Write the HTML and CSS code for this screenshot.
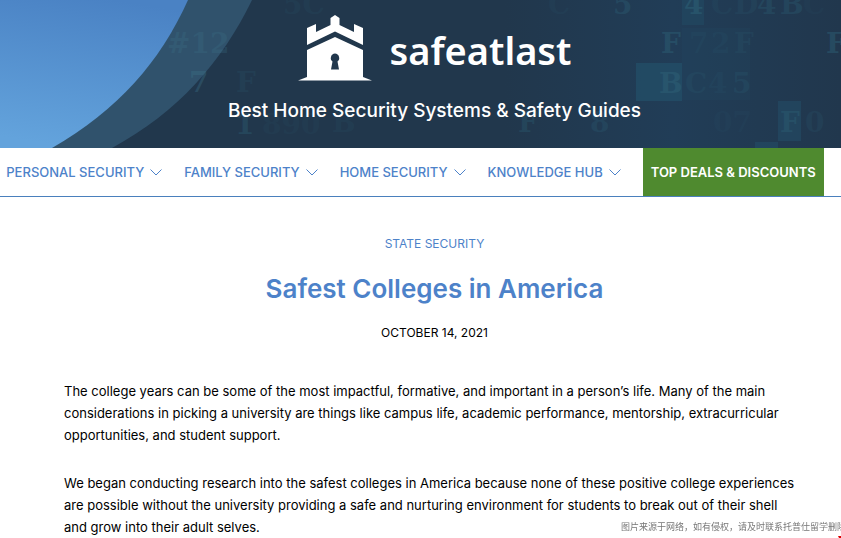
FILE: index.html
```html
<!DOCTYPE html>
<html lang="en">
<head>
    <meta charset="UTF-8">
    <meta name="viewport" content="width=device-width, initial-scale=1.0">
    <title>Safest Colleges in America | SafeAtLast</title>
    <link rel="stylesheet" href="styles.css">
</head>
<body>
    <header class="site-header">
        <svg class="header-art" viewBox="0 0 841 148" preserveAspectRatio="xMinYMin slice" aria-hidden="true">
            <defs>
                <linearGradient id="sky" x1="0.6" y1="0" x2="0.4" y2="1">
                    <stop offset="0" stop-color="#4a82c4"/>
                    <stop offset="1" stop-color="#63a3dc"/>
                </linearGradient>
                <linearGradient id="night" x1="0" y1="0" x2="1" y2="0">
                    <stop offset="0.6" stop-color="#21374c"/>
                    <stop offset="0.8" stop-color="#213d57"/>
                    <stop offset="1" stop-color="#21374d"/>
                </linearGradient>
            </defs>
            <rect width="841" height="148" fill="url(#night)"/>
            <path d="M0 0H252C222 62 178 112 112 148H0Z" fill="#30526c"/>
            <path d="M0 0H188C160 62 118 110 52 148H0Z" fill="url(#sky)"/>
            <!-- code blocks -->
            <g fill="#24506a">
                <rect x="636" y="63" width="46" height="38" opacity="0.7"/>
                <rect x="682" y="0" width="22" height="25" opacity="0.4"/>
                <rect x="682" y="28" width="68" height="72" opacity="0.15"/>
                <rect x="778" y="101" width="23" height="40" opacity="0.5"/>
                <rect x="755" y="142" width="23" height="6" opacity="0.5"/>
            </g>
            <g class="code">
                <text class="lit" x="167" y="53" opacity="0.25">#12</text>
                <text class="lit" x="189" y="92" opacity="0.35">7</text>
                <text x="236" y="92" opacity="0.2">F</text>
                <text x="235" y="134" opacity="0.4">1</text>
                <text x="262" y="134" opacity="0.12">890</text>
                <text x="283" y="14" opacity="0.15">5C</text>
                <text x="332" y="132" opacity="0.15">B</text>
                <text x="518" y="132" opacity="0.35">F</text>
                <text x="548" y="14" opacity="0.12">C</text>
                <text x="613" y="14" opacity="0.4">5</text>
                <text x="684" y="14" opacity="0.6">4</text>
                <text x="711" y="14" opacity="0.15">C</text>
                <text x="734" y="14" opacity="0.2">D</text>
                <text x="757" y="14" opacity="0.35">4</text>
                <text x="780" y="14" opacity="0.35">B</text>
                <text x="803" y="14" opacity="0.1">C</text>
                <text x="661" y="53" opacity="0.5">F</text>
                <text x="689" y="53" opacity="0.15">7</text>
                <text x="711" y="53" opacity="0.15">2</text>
                <text x="734" y="53" opacity="0.2">F</text>
                <text x="826" y="53" opacity="0.5">F</text>
                <text x="659" y="93" opacity="0.6">B</text>
                <text x="685" y="93" opacity="0.2">C</text>
                <text x="708" y="93" opacity="0.15">4</text>
                <text x="732" y="93" opacity="0.25">5</text>
                <text x="590" y="132" opacity="0.3">8</text>
                <text x="713" y="132" opacity="0.1">07</text>
                <text x="780" y="132" opacity="0.45">F</text>
                <text x="805" y="132" opacity="0.2">0</text>
            </g>
        </svg>
        <a class="logo" href="#">
            <svg class="logo-mark" viewBox="0 0 76 68" aria-hidden="true">
                <path d="M10 31V14L19 10V18L33.500 11V4L38 1L42.500 4V11L57 18V10L66 14V31L38 17.500Z"/>
                <path fill-rule="evenodd" d="M38 23L66 36V63L75 66.500H1L10 63V36ZM38 39.500A4.500 4.500 0 0 0 35.500 47.500L34 55.500H42L40.500 47.500A4.500 4.500 0 0 0 38 39.500Z"/>
            </svg>
            <span class="logo-text">safeatlast</span>
        </a>
        <p class="tagline">Best Home Security Systems &amp; Safety Guides</p>
    </header>

    <nav class="main-nav">
        <a class="nav-link" href="#">PERSONAL SECURITY <svg class="chevron" viewBox="0 0 12 7"><path d="M0.500 0.500L6 6L11.500 0.500"/></svg></a>
        <a class="nav-link" href="#">FAMILY SECURITY <svg class="chevron" viewBox="0 0 12 7"><path d="M0.500 0.500L6 6L11.500 0.500"/></svg></a>
        <a class="nav-link" href="#">HOME SECURITY <svg class="chevron" viewBox="0 0 12 7"><path d="M0.500 0.500L6 6L11.500 0.500"/></svg></a>
        <a class="nav-link" href="#">KNOWLEDGE HUB <svg class="chevron" viewBox="0 0 12 7"><path d="M0.500 0.500L6 6L11.500 0.500"/></svg></a>
        <a class="nav-deals" href="#">TOP DEALS &amp; DISCOUNTS</a>
    </nav>

    <main class="article">
        <div class="article-head">
            <a class="category" href="#">STATE SECURITY</a>
            <h1>Safest Colleges in America</h1>
            <time class="date" datetime="2021-10-14">OCTOBER 14, 2021</time>
        </div>
        <p>The college years can be some of the most impactful, formative, and important in a person’s life. Many of the main<br>
            considerations in picking a university are things like campus life, academic performance, mentorship, extracurricular<br>
            opportunities, and student support.</p>
        <p>We began conducting research into the safest colleges in America because none of these positive college experiences<br>
            are possible without the university providing a safe and nurturing environment for students to break out of their shell<br>
            and grow into their adult selves.</p>
    </main>

    <div class="credit" lang="zh">图片来源于网络，如有侵权，请及时联系托普仕留学删除</div>
    <svg class="corner" viewBox="0 0 3 2" aria-hidden="true"><path d="M0 0H3V2H1Z"/></svg>
</body>
</html>
```

FILE: styles.css
```css
* {
    box-sizing: border-box;
}

body {
    margin: 0;
    overflow-x: hidden;
    font-family: Inter, "Open Sans", sans-serif;
    font-size: 13px;
    color: #000;
    background: #fff;
}

a {
    text-decoration: none;
}

.site-header {
    position: relative;
    display: flex;
    flex-direction: column;
    align-items: center;
    height: 148px;
    padding: 14px 0 0 28px;
    overflow: hidden;
    background: #21374c;
    color: #fff;
}

.header-art {
    position: absolute;
    top: 0;
    left: 0;
    width: 100%;
    height: 100%;
}

.code {
    fill: #2c5d73;
    font-family: "DejaVu Serif", serif;
    font-size: 28px;
    font-weight: bold;
}

.code .lit {
    fill: #3c7288;
}

.logo {
    position: relative;
    display: flex;
    align-items: flex-start;
    gap: 16px;
    color: #fff;
}

.logo-mark {
    width: 76px;
    height: 68px;
    fill: #fff;
}

.logo-text {
    font-family: "Noto Sans", sans-serif;
    font-size: 38px;
    font-weight: 600;
    line-height: 72px;
}

.tagline {
    position: relative;
    margin: 13px 0 0;
    font-size: 19px;
    font-weight: 500;
    line-height: 24px;
}

.main-nav {
    display: flex;
    align-items: stretch;
    justify-content: center;
    gap: 22px;
    height: 49px;
    padding-right: 11px;
    border-bottom: 1px solid #4a80bd;
    white-space: nowrap;
}

.nav-link {
    display: flex;
    align-items: center;
    gap: 6px;
    font-size: 13px;
    font-weight: 500;
    color: #4d82c9;
}

.chevron {
    width: 12px;
    height: 7px;
    fill: none;
    stroke: #4d82c9;
}

.nav-deals {
    display: flex;
    align-items: center;
    padding: 0 8px;
    font-size: 13px;
    font-weight: 600;
    color: #fff;
    background: #4f8a2f;
}

.article {
    padding: 37px 36px 0 64px;
    line-height: 22px;
}

.article-head {
    display: flex;
    flex-direction: column;
    align-items: center;
    margin-bottom: 37px;
    font-size: 12px;
    line-height: 20px;
}

.category {
    color: #4d82c9;
}

h1 {
    margin: 15px 0 14px;
    font-size: 26px;
    font-weight: 600;
    line-height: 40px;
    color: #4d82c9;
}

.article p {
    margin: 0 0 26px;
    white-space: nowrap;
}

.article p:last-child {
    margin-bottom: 0;
}

/* image credit laid over the bottom edge of the window */
.credit {
    position: fixed;
    left: 621px;
    bottom: 4px;
    font-family: "Noto Sans CJK SC", sans-serif;
    font-size: 9px;
    line-height: 14px;
    white-space: nowrap;
    color: #777;
}

.corner {
    position: fixed;
    right: 0;
    bottom: 0;
    width: 3px;
    height: 2px;
    fill: #d00;
}
```
